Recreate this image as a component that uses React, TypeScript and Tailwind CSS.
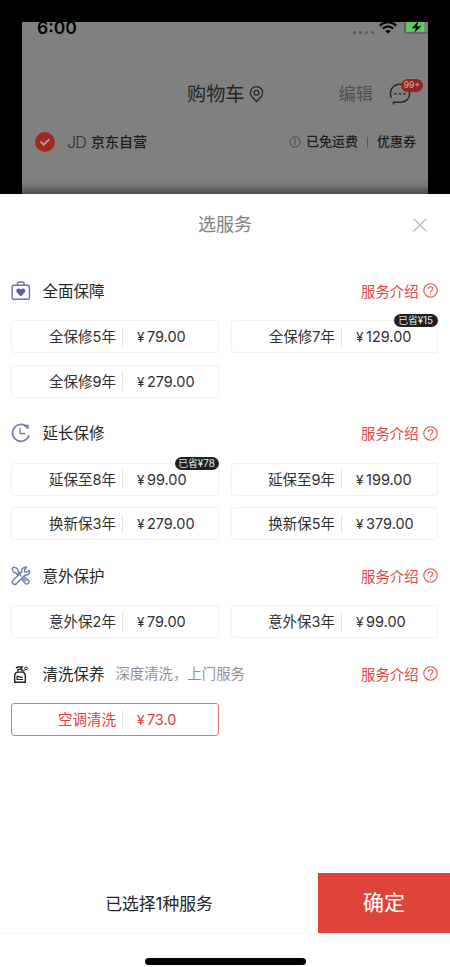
import type { ReactNode } from "react";

interface ServiceOption {
    name: string;
    price: string;
    saved?: string;
    selected?: boolean;
}

interface ServiceGroup {
    title: string;
    note?: string;
    icon: ReactNode;
    options: ServiceOption[];
}

const CaseIcon = () => (
    <svg width="20" height="20" viewBox="0 0 20 20" fill="none" stroke="#6b72ad" strokeWidth="1.4">
        <rect x="1.2" y="4.2" width="17.2" height="14" rx="1.3" />
        <path d="M6.5 4.1V2.300a1 1 0 0 1 1-1h4.600a1 1 0 0 1 1 1v1.800" />
        <path d="M9.800 15.400 6 11.600c-2.300-2.700 1.400-5.700 3.800-3 2.400-2.700 6.100.3 3.800 3z" fill="#575ea5" stroke="none" />
    </svg>
);

const ClockIcon = () => (
    <svg width="20" height="20" viewBox="0 0 20 20" fill="none" stroke="#737bb5" strokeWidth="1.700">
        <path d="M15.600 3.600A8.400 8.400 0 1 0 18 12.300" />
        <path d="M13.600 1.800h4v4.100h-2.200v-2h-1.800z" fill="#737bb5" stroke="none" />
        <path d="M9 4.900v5.600h5.200" strokeWidth="1.300" />
    </svg>
);

const ToolsIcon = () => (
    <svg width="20" height="20" viewBox="0 0 20 20" fill="none" stroke="#737bb5" strokeWidth="1.400" strokeLinejoin="round">
        <path d="M1.200 2.600 2.700 1.100l3.400 1.200.9 2.400 5 5 5.500 4.700c1.700 1.700-1.400 4.800-3.100 3.100L9.700 12 4.700 7l-2.400-.9z" />
        <path d="M18.400 4.300 16 6.300l-2.200-.4-.4-2.100 2.200-2.500c-3.200-.6-5.400 1.900-4.800 4.500L1.900 14.600c-1.900 2.300 1.100 5.200 3.300 3.300l8.900-8.800c3.100.5 5.300-1.900 4.300-4.800z" fill="#fff" />
        <path d="m6.600 6.600 4 4M12.200 12.200l3 3" />
    </svg>
);

const BottleIcon = () => (
    <svg width="20" height="20" viewBox="0 0 20 20" fill="none" stroke="#222" strokeWidth="1.400">
        <path d="M3.700 18.300v-7.100c0-2.100 1.300-2.700 2.600-3.100h5.400c1.300.4 2.600 1 2.600 3.100v7.100z" />
        <path d="M6.900 7.700V5.400h4v2.300" strokeWidth="1.300" />
        <path d="M5 4.200 6.500 3h4.700L9.900 5.100" strokeWidth="1.500" />
        <circle cx="15" cy="4.400" r="1.400" strokeWidth="1" />
        <circle cx="12.700" cy="6.700" r=".7" strokeWidth=".8" />
        <path d="M6.100 11.600v3.900h6M6.300 13.100l1.700-.6 1.700.8 2.100-.3" strokeWidth="1.200" />
    </svg>
);

const groups: ServiceGroup[] = [
    {
        title: "全面保障",
        icon: <CaseIcon />,
        options: [
            { name: "全保修5年", price: "79.00" },
            { name: "全保修7年", price: "129.00", saved: "已省¥15" },
            { name: "全保修9年", price: "279.00" },
        ],
    },
    {
        title: "延长保修",
        icon: <ClockIcon />,
        options: [
            { name: "延保至8年", price: "99.00", saved: "已省¥78" },
            { name: "延保至9年", price: "199.00" },
            { name: "换新保3年", price: "279.00" },
            { name: "换新保5年", price: "379.00" },
        ],
    },
    {
        title: "意外保护",
        icon: <ToolsIcon />,
        options: [
            { name: "意外保2年", price: "79.00" },
            { name: "意外保3年", price: "99.00" },
        ],
    },
    {
        title: "清洗保养",
        note: "深度清洗，上门服务",
        icon: <BottleIcon />,
        options: [{ name: "空调清洗", price: "73.0", selected: true }],
    },
];

const StatusBar = () => (
    <div className="flex h-[15px] justify-between pl-[15px]">
        <span className="-mt-[6px] text-[17.500px] font-semibold leading-6 text-black">6:00</span>
        <div className="flex">
            <div className="mr-[5px] mt-[9px] flex gap-[3px]">
                {[0, 1, 2, 3].map((dot) => (
                    <i key={dot} className="size-[3px] rounded-full bg-[#585858]" />
                ))}
            </div>
            <svg className="mr-[7px]" width="18" height="12" viewBox="0 0 18 12" fill="none" stroke="#000" strokeWidth="2.300">
                <path d="M.8 3.600c4.700-4.700 11.700-4.700 16.400 0M3.900 6.700c3-2.900 7.200-2.900 10.200 0" />
                <path d="M9 11.600 6.300 9.100c1.500-1.400 3.900-1.400 5.400 0z" fill="#000" stroke="none" />
            </svg>
            <svg width="24" height="12" viewBox="0 0 24 12">
                <path d="M.8-2v11.200c0 1.200.7 1.800 1.800 1.800H24" fill="none" stroke="#4c4c4c" strokeWidth="1.100" />
                <path d="M2.300 0h18v9.800h-17c-.6 0-1-.4-1-1z" fill="#5cd05d" />
                <path d="M14.500-1 7.700 6.200h4.400l-1.900 4.500 7.300-6.400H13z" fill="#000" />
            </svg>
        </div>
    </div>
);

const CartHeader = () => (
    <div className="mt-[43px] flex h-7 items-center pl-[165px] pr-[17px]">
        <span className="text-[19.200px] leading-7 text-[#242424]">购物车</span>
        <svg className="ml-[4px]" width="15" height="18" viewBox="0 0 15 18" fill="none" stroke="#292929" strokeWidth="1.300">
            <path d="M7.500 16.500 2.900 11.700a6.100 6.100 0 1 1 9.200 0z" />
            <circle cx="7.500" cy="7.700" r="2.400" />
        </svg>
        <span className="ml-[75px] text-[17.200px] leading-7 text-[#505050]">编辑</span>
        <div className="relative ml-[16px]">
            <svg width="22" height="22" viewBox="0 0 22 22" fill="none" stroke="#2b2b2b" strokeWidth="1.500">
                <path d="M2.300 14.700C-.6 7.300 4.200 1.300 10.800 1.300c6 0 9.900 4.300 9.900 9.300 0 5.200-4.100 8.600-9 8.600H4.500v2.200" />
                <path d="M5.300 10.800h2.300M9.800 10.800h2.300M14.200 10.800h2.300" />
            </svg>
            <span className="absolute -top-[4px] left-[12px] flex h-[13px] w-[22px] items-center justify-center rounded-full bg-[#98231f] text-[8.500px] font-medium text-[#c6a5a3]">
                99+
            </span>
        </div>
    </div>
);

const StoreRow = () => (
    <div className="mt-[23px] flex h-[22px] items-center pl-[13px] text-[#1d1d1d]">
        <span className="flex size-5 items-center justify-center rounded-full bg-[#a12a1e]">
            <svg width="12" height="12" viewBox="0 0 12 12" fill="none" stroke="#b1a29f" strokeWidth="1.700">
                <path d="m1.500 5.700 3.200 3 5.600-5.600" />
            </svg>
        </span>
        <span className="ml-3 text-[16px] font-light leading-5 tracking-[-0.800px] text-[#303030]">JD</span>
        <span className="ml-[5px] text-[14px] font-medium leading-5">京东自营</span>
        <svg className="ml-[142px]" width="12" height="12" viewBox="0 0 12 12" fill="none" stroke="#454545" strokeWidth=".9">
            <circle cx="6" cy="6" r="5.100" />
            <path d="M6 3v6M5 3.500h1" />
        </svg>
        <span className="ml-[5px] text-[13px] font-medium">已免运费</span>
        <i className="mx-[9px] h-[11px] w-px bg-[#575757]" />
        <span className="text-[13px] font-medium">优惠券</span>
    </div>
);

const OptionCard = ({ option }: { option: ServiceOption }) => (
    <div
        className={`relative flex h-[33px] items-center rounded-[3px] border text-[14.500px] ${
            option.selected ? "border-[#df7773] text-[#db403c]" : "border-[#f1f1f1] text-[#303030]"
        }`}
    >
        <span className="w-[103.500px] pt-px text-right leading-5">{option.name}</span>
        <i className="ml-[6px] h-5 w-px bg-[#e4e4e4]" />
        <span className="ml-[14px] flex items-baseline pt-px leading-5">
            <span className="w-[9px] text-[13.500px]">¥</span>
            <span className="ml-px">{option.price}</span>
        </span>
        {option.saved && (
            <span className="absolute -right-px -top-[7px] flex h-[13px] w-[44px] items-center justify-center rounded-full bg-[#202020] pt-px text-[9.800px] leading-none text-[#e4e4e4]">
                {option.saved}
            </span>
        )}
    </div>
);

const ServiceSection = ({ group }: { group: ServiceGroup }) => (
    <section className="mb-[23.500px]">
        <div className="mb-[17.500px] flex h-6 items-center">
            {group.icon}
            <h3 className="ml-[11px] pt-[2px] text-[15.500px] leading-6 text-[#262626]">{group.title}</h3>
            {group.note && <span className="ml-[11px] pt-px text-[14.400px] leading-6 text-[#90909a]">{group.note}</span>}
            <span className="ml-auto mr-[4px] pt-[2px] text-[14.400px] leading-6 text-[#df4743]">服务介绍</span>
            <svg width="15" height="15" viewBox="0 0 15 15" fill="none" stroke="#e05a56" strokeWidth="1.100">
                <circle cx="7.500" cy="7.500" r="6.700" />
                <path d="M5.300 6c0-3 4.500-2.900 4.500-.2 0 1.700-2.200 1.700-2.200 3.600M7.600 10.600v1.200" />
            </svg>
        </div>
        <div className="grid grid-cols-2 gap-x-3 gap-y-[11.500px]">
            {group.options.map((option) => (
                <OptionCard key={option.name} option={option} />
            ))}
        </div>
    </section>
);

export default function App() {
    return (
        <div className="flex h-[967px] w-[450px] flex-col overflow-hidden bg-black font-[Inter,'Noto_Sans_CJK_SC',sans-serif]">
            {/* Cart page behind the sheet */}
            <div className="ml-[22px] mt-[22px] h-[172px] w-[406px] overflow-hidden bg-[linear-gradient(#808080_157px,#777_163px,#4c4c4c_172px)]">
                <StatusBar />
                <CartHeader />
                <StoreRow />
            </div>

            {/* Service sheet */}
            <div className="flex flex-1 flex-col bg-white">
                <div className="flex h-[61px] items-center pl-[198px] pr-[23px]">
                    <h2 className="text-[18px] leading-7 text-[#808080]">选服务</h2>
                    <svg className="ml-auto" width="14" height="14" viewBox="0 0 14 14" stroke="#bdbdbd" strokeWidth="1.500">
                        <path d="m.7.7 12.600 12.600M13.300.7.7 13.300" />
                    </svg>
                </div>
                <div className="flex-1 pl-[11.400px] pr-[12.400px] pt-[23.500px]">
                    {groups.map((group) => (
                        <ServiceSection key={group.title} group={group} />
                    ))}
                </div>
                <div className="flex h-[61px] border-b border-[#f6f6f6]">
                    <div className="flex w-[318px] items-center justify-center pt-[3px] text-[16.800px] text-[#262626]">已选择1种服务</div>
                    <button className="flex-1 bg-[#de443a] text-[21px] text-white">确定</button>
                </div>
                <div className="flex h-[33px] justify-center pt-6">
                    <i className="h-[7px] w-[161px] rounded-full bg-black" />
                </div>
            </div>
        </div>
    );
}
